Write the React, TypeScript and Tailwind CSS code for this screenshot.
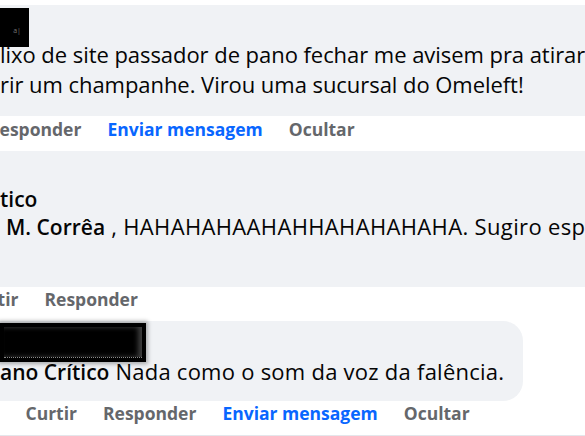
import React from 'react';

// Recorte de uma thread de comentários (rolada para a direita)

const font = { fontFamily: '"Open Sans", "Noto Sans", Arial, sans-serif' };

interface ActionRowProps {
    items: { label: string; blue?: boolean }[];
    offset: string;
}

const ActionRow: React.FC<ActionRowProps> = ({ items, offset }) => {
    return (
        <div className={`flex whitespace-nowrap text-[17.5px] font-bold leading-[20px] text-[#65676b] ${offset}`}>
            {items.map((item, i) => (
                <span key={i} className={`mr-[26px] shrink-0 ${item.blue ? 'text-[#0866ff]' : ''}`}>
                    {item.label}
                </span>
            ))}
        </div>
    );
};

const App: React.FC = () => {
    return (
        <div className="w-[585px] h-[436px] overflow-hidden bg-white text-[#050505]" style={font}>
            {/* comentário 1 */}
            <div className="pt-[5px]">
                <div className="bg-[#f0f2f5] pt-[3px] w-[700px] h-[111px]">
                    <div className="w-[29px] h-[39px] bg-black flex items-center justify-center">
                        <span className="text-[7px] leading-none text-[#777] mt-[6px] ml-[5px]">a|</span>
                    </div>
                    <div className="-mt-[8px] text-[22px] tracking-[-0.05px] leading-[30px] whitespace-nowrap">
                        <div>lixo de site passador de pano fechar me avisem pra atirar</div>
                        <div>rir um champanhe. Virou uma sucursal do Omeleft!</div>
                    </div>
                </div>
            </div>
            <div className="h-[35px] pt-[3px]">
                <ActionRow
                    offset="-ml-[12px]"
                    items={[{ label: 'Responder' }, { label: 'Enviar mensagem', blue: true }, { label: 'Ocultar' }]}
                />
            </div>

            {/* comentário 2 */}
            <div className="bg-[#f0f2f5] w-[700px] h-[136px] pt-[35px] text-[22px] leading-[27px] whitespace-nowrap">
                <div className="text-[21px] font-semibold">tico</div>
                <div className="ml-[6px] tracking-[0.35px]">
                    <span className="text-[21px] font-semibold tracking-normal">M. Corrêa</span> , HAHAHAHAAHAHHAHAHAHAHA. Sugiro espaço
                </div>
            </div>
            <div className="h-[34px] pt-[2px]">
                <ActionRow offset="-ml-[33px]" items={[{ label: 'Curtir' }, { label: 'Responder' }]} />
            </div>

            {/* comentário 3 */}
            <div className="bg-[#f0f2f5] w-[523px] h-[80px] rounded-r-[20px] pt-[2px]">
                <div className="w-[146px] h-[39px] bg-black p-[4px] shadow-[0_0_4px_2px_rgba(0,0,0,0.3)]">
                    <div className="h-full w-[138px] border-b border-dotted border-[#8a8a8a] shadow-[inset_-4px_0_5px_rgba(140,140,140,0.45)]" />
                </div>
                <div className="-mt-[6px] text-[22px] tracking-[0.25px] leading-[30px] whitespace-nowrap">
                    <span className="text-[21px] font-semibold tracking-normal">ano Crítico</span> Nada como o som da voz da falência.
                </div>
            </div>
            <div className="h-[35px] pt-[2px] border-b border-[#e4e6eb]">
                <ActionRow
                    offset="-ml-[12px]"
                    items={[
                        { label: 'h' },
                        { label: 'Curtir' },
                        { label: 'Responder' },
                        { label: 'Enviar mensagem', blue: true },
                        { label: 'Ocultar' },
                    ]}
                />
            </div>
        </div>
    );
};

export default App;
